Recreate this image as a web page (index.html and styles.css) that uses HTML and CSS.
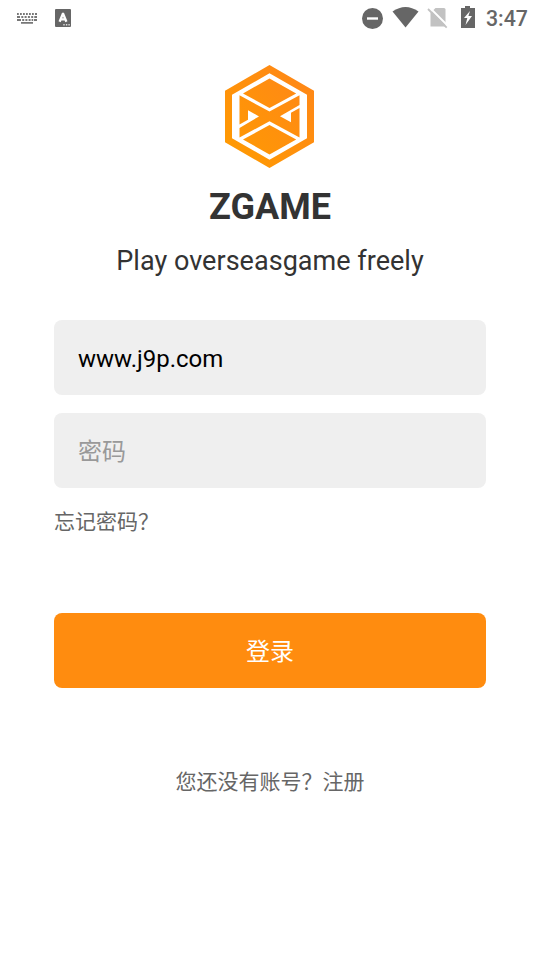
FILE: index.html
```html
<!DOCTYPE html>
<html lang="zh-CN">
<head>
<meta charset="utf-8">
<title>ZGAME</title>
<link rel="stylesheet" href="styles.css">
</head>
<body>
<header class="status">
  <svg class="keyboard" width="20" height="12" viewBox="0 0 20 12" fill="#777"><path d="M0 0h1.8v2H0zM3 0h1.8v2H3zM6 0h1.8v2H6zM9 0h1.8v2H9zM12 0h1.8v2H12zM15 0h1.8v2H15zM18 0h2v2h-2zM0 3h3v2H0zM4.3 3h2v2h-2zM7.6 3h2v2h-2zM10.9 3h2v2h-2zM14.2 3h2v2h-2zM17.3 3H20v2h-2.7zM0 6h4v2H0zM5.2 6h2v2h-2zM8.4 6h2v2h-2zM11.6 6h2v2h-2zM14.6 6h1.6v2h-1.6zM17 6h3v2h-3zM4 9h12v1.8H4z"/></svg>
  <svg class="input-mode" width="16" height="18" viewBox="0 0 16 18"><rect width="16" height="18" rx="1" fill="#666"/><path d="M4.6 12.8 7.8 5h.4l3.2 7.8M5.8 10.4h4.4" fill="none" stroke="#fff" stroke-width="2.3"/><path d="M8.3 15h1.4v1.5H8.3zM10.9 15h1.4v1.5h-1.4zM13.4 15h1.4v1.5h-1.4z" fill="#ddd"/></svg>
  <svg class="signals" width="114" height="24" viewBox="0 0 114 24">
    <circle cx="10.5" cy="12.5" r="10.5" fill="#666"/><path d="M5 11.3h11v2.4H5z" fill="#fff"/>
    <path d="M30.5 5.5Q43.5-3.5 56.5 5.5L43.5 21.5z" fill="#666"/>
    <path d="M73.5 2H82a1.5 1.5 0 0 1 1.5 1.5V20.5H68.5V7z" fill="#c2c2c2"/><path d="m67.5 1.5 19 19" stroke="#fff" stroke-width="2"/><path d="m66 3 18.7 18.7" stroke="#c2c2c2" stroke-width="1.8"/>
    <path d="M103 0h5v2h5v20H99V2h4z" fill="#666"/><path d="m108 5-6 7h3.3l-1.8 7 6.5-9h-3.6z" fill="#fff"/>
  </svg>
  <span class="clock">3:47</span>
</header>
<main class="login">
  <svg class="logo" width="90" height="104" viewBox="0 0 90 104">
    <defs><linearGradient id="g" x1="1" y1="0" x2="0" y2="1"><stop offset="0" stop-color="#ff8519"/><stop offset="1" stop-color="#ff9c00"/></linearGradient></defs>
    <path fill="url(#g)" fill-rule="evenodd" d="M44.5 0 89 25.7v51.6L44.5 103 0 77.3V25.7zM44.5 8.2 7 29.8v43.4l37.5 21.6L82 73.2V29.8zM44.5 13.4 71.2 28.5 44.5 43 18 28.5zM44.5 60 71.2 74.5 44.5 89.5 18 74.5zM14.5 30.3 44.5 46.5 74.5 30.3V40L55 51.2 66 57.3V47.8L74.5 43V72.5L44.5 56.3 14.5 72.5V63L34 51.4 23 45.2V54.8L14.5 59.6z"/>
  </svg>
  <h1 class="title">ZGAME</h1>
  <p class="tagline">Play overseasgame freely</p>
  <form class="form">
    <input class="field" type="text" value="www.j9p.com" aria-label="账号">
    <input class="field" type="password" placeholder="密码">
    <a class="forgot">忘记密码？</a>
    <button class="submit" type="button">登录</button>
  </form>
  <p class="register">您还没有账号？注册</p>
</main>
</body>
</html>
```
FILE: styles.css
```css
* { box-sizing: border-box; }
body { margin: 0; height: 960px; background: #fff; color: #333; font-family: Roboto, "Noto Sans CJK SC", sans-serif; overflow: hidden; }
.status { display: flex; height: 36px; padding: 0 12px 0 17px; }
.keyboard { margin-top: 13px; }
.input-mode { margin: 9px 0 0 18px; }
.signals { margin: 6px 0 0 auto; }
.clock { margin-left: 10px; width: 42px; font-size: 21.3px; font-weight: 500; line-height: 38px; color: #666; }
.login { display: flex; flex-direction: column; align-items: center; padding: 29px 54px 0; }
.logo { display: block; }
.title { margin: 16px 0 0; font-size: 36px; line-height: 44px; font-weight: 700; }
.tagline { margin: 14px 0 0; font-size: 27px; line-height: 36px; letter-spacing: 0.03px; }
.form { display: flex; flex-direction: column; align-self: stretch; margin-top: 41px; }
.field { width: 100%; height: 75px; margin: 0 0 18px; padding: 2px 24px 0; border: 0; border-radius: 8px; background: #efefef; color: #000; font: 24px Roboto, "Noto Sans CJK SC", sans-serif; outline: 0; }
.field::placeholder { color: #999; opacity: 1; }
.forgot { font-size: 21px; line-height: 32px; color: #666; }
.submit { height: 75px; margin-top: 75px; padding: 0 0 2px; border: 0; border-radius: 8px; background: #ff8c0f; color: #fff; font: 24px Roboto, "Noto Sans CJK SC", sans-serif; }
.register { margin: 78px 0 0; font-size: 21px; line-height: 32px; color: #666; }
```
